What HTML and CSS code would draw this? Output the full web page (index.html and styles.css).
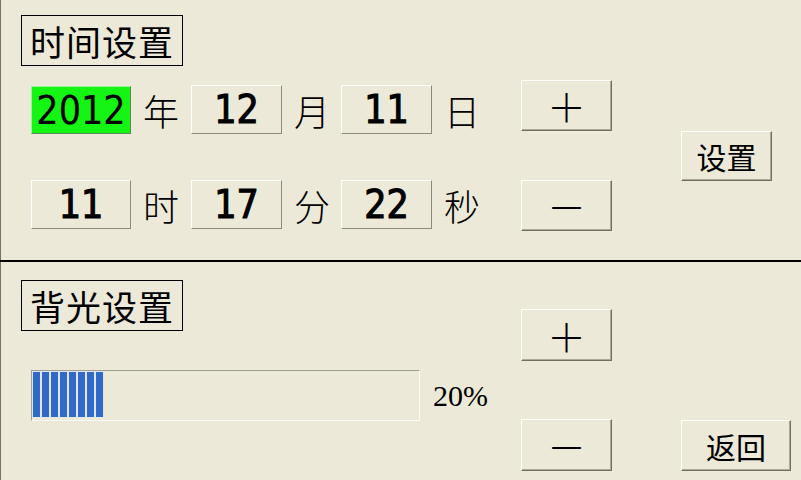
FILE: index.html
```html
<!DOCTYPE html>
<html lang="zh-CN">
<head>
<meta charset="utf-8">
<title>设置</title>
<link rel="stylesheet" href="styles.css">
</head>
<body>
<div class="screen">
  <section class="time">
    <div class="title">时间设置</div>
    <div class="time-grid">
      <div class="field active r1">2012</div><div class="unit r1">年</div>
      <div class="field r1">12</div><div class="unit r1">月</div>
      <div class="field r1">11</div><div class="unit r1">日</div>
      <button class="btn sym">＋</button>
      <button class="btn set">设置</button>
      <div class="field">11</div><div class="unit">时</div>
      <div class="field">17</div><div class="unit">分</div>
      <div class="field">22</div><div class="unit">秒</div>
      <button class="btn sym">－</button>
    </div>
  </section>
  <div class="divider"></div>
  <section class="backlight">
    <div class="bl-left">
      <div class="title">背光设置</div>
      <div class="bar-row">
        <div class="progress">
          <div class="chunks">
            <span class="chunk"></span><span class="chunk"></span><span class="chunk"></span><span class="chunk"></span>
            <span class="chunk"></span><span class="chunk"></span><span class="chunk"></span><span class="chunk"></span>
          </div>
        </div>
        <span class="pct">20%</span>
      </div>
    </div>
    <div class="bl-btns">
      <button class="btn sym plus">＋</button>
      <button class="btn sym minus">－</button>
    </div>
    <button class="btn back">返回</button>
  </section>
</div>
</body>
</html>
```
FILE: styles.css
```css
html, body {
  margin: 0;
  padding: 0;
  background: #ece9d8;
}

.screen {
  width: 801px;
  height: 480px;
  overflow: hidden;
  background: #ece9d8;
  box-shadow: inset 1px 0 #76756d;
  font-family: "Noto Sans CJK SC", sans-serif;
  color: #000;
}

.time {
  height: 260px;
  box-sizing: border-box;
  padding: 15px 0 0 21px;
}

.title {
  display: flex;
  align-items: center;
  justify-content: center;
  width: 162px;
  height: 51px;
  box-sizing: border-box;
  border: 1px solid #000;
  font-size: 35px;
  line-height: 1;
  letter-spacing: 1px;
}

.time-grid {
  display: grid;
  grid-template-columns: 100px 60px 91px 59px 91px 89px 91px 160px;
  grid-template-rows: 51px 51px;
  row-gap: 49px;
  margin: 14px 0 0 10px;
}

.field {
  height: 49px;
  box-sizing: border-box;
  border: 1px solid;
  border-color: #fffffb #8d8b80 #8d8b80 #fffffb;
  background: #ece9d8;
  display: flex;
  align-items: center;
  justify-content: center;
  font-family: "DejaVu Sans Condensed", "DejaVu Sans", sans-serif;
  font-stretch: condensed;
  font-size: 39px;
  line-height: 1;
  -webkit-text-stroke: 1.1px #000;
}

.field.active {
  background: #14f514;
  border-color: #9cf59c #5a8a5a #5a8a5a #9cf59c;
  -webkit-text-stroke: 0.2px #000;
  margin-top: 6px;
  height: 48px;
}

.r1 {
  margin-top: 5px;
}

.unit {
  height: 49px;
  display: flex;
  align-items: center;
  padding-left: 12px;
  font-size: 36px;
  font-weight: 300;
  line-height: 1;
}

.btn {
  font-family: "Noto Sans CJK SC", sans-serif;
  color: #000;
  background: #ece9d8;
  border: 1px solid;
  border-color: #fffffb #716f64 #716f64 #fffffb;
  box-shadow: inset -1px -1px #aca899;
  padding: 0;
  margin: 0;
  width: 91px;
  height: 51px;
  box-sizing: border-box;
  display: flex;
  align-items: center;
  justify-content: center;
  line-height: 1;
}

.sym {
  font-size: 39px;
  font-weight: 300;
}

.set {
  grid-column: 8;
  grid-row: 1 / 3;
  align-self: center;
  justify-self: end;
  height: 50px;
  font-size: 30px;
}

.divider {
  height: 2px;
  background: #000;
}

.backlight {
  display: flex;
  height: 218px;
  box-sizing: border-box;
  padding: 18px 0 0 21px;
}

.bl-left {
  width: 500px;
}

.bar-row {
  display: flex;
  align-items: center;
  margin: 39px 0 0 10px;
}

.progress {
  width: 389px;
  height: 51px;
  box-sizing: border-box;
  border: 1px solid;
  border-color: #a09f93 #fbfbf5 #fbfbf5 #a09f93;
}

.chunks {
  display: flex;
  gap: 2px;
  width: max-content;
  padding: 1px;
  background: #dfe7f4;
}

.chunk {
  width: 7px;
  height: 45px;
  background: #3169c6;
}

.pct {
  margin-left: 13px;
  font-family: "Liberation Serif", serif;
  font-size: 30px;
  line-height: 1;
}

.bl-btns {
  display: flex;
  flex-direction: column;
  width: 91px;
}

.plus {
  margin-top: 29px;
  height: 52px;
}

.minus {
  margin-top: 58px;
  height: 52px;
}

.back {
  width: 110px;
  margin-left: 69px;
  align-self: flex-end;
  margin-bottom: 9px;
  font-size: 30px;
}
```
